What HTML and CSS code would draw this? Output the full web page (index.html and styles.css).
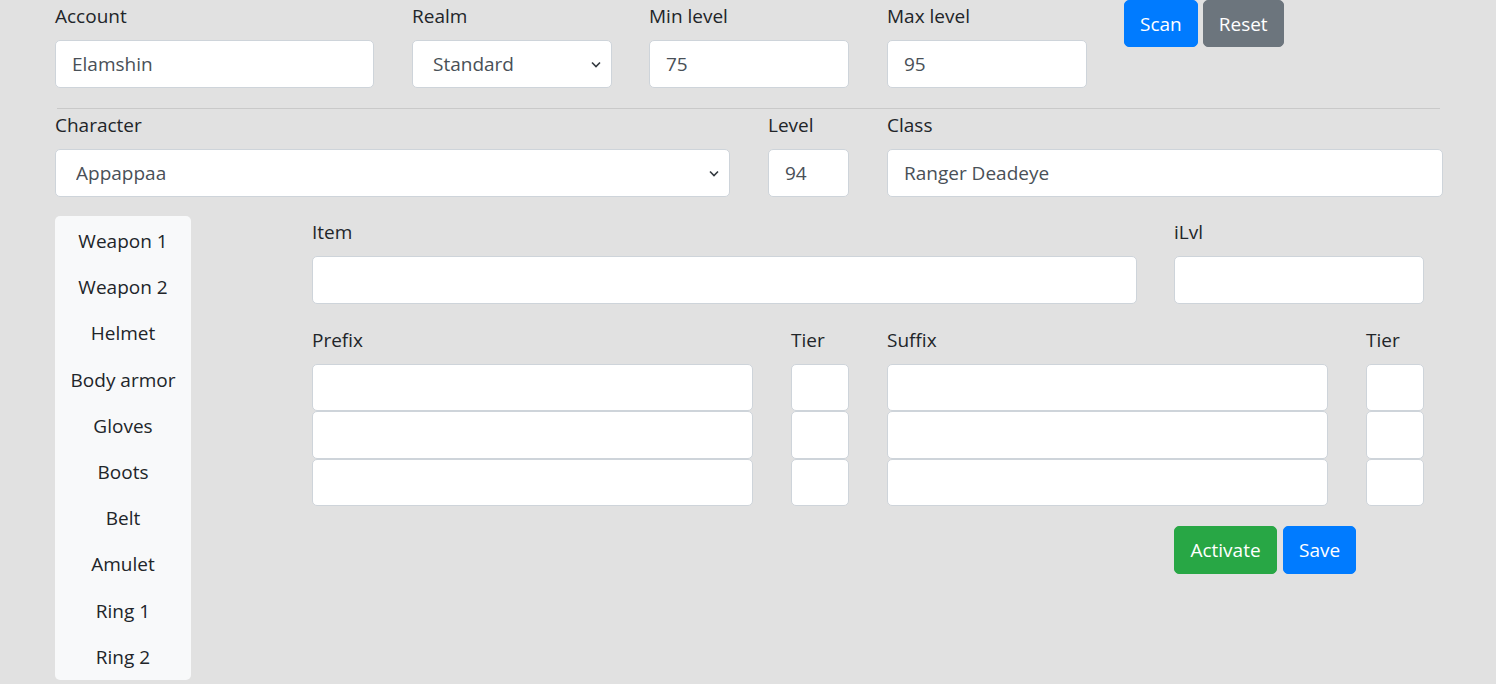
FILE: index.html
```html
<!DOCTYPE html>
<html lang="en">
<head>
<meta charset="utf-8">
<title>Scanner</title>
<link rel="stylesheet" href="styles.css">
</head>
<body>
<div class="page">
  <div class="row row-top">
    <div class="field w-account">
      <label class="lbl">Account</label>
      <input class="ctl" type="text" value="Elamshin">
    </div>
    <div class="field w-200 nudge">
      <label class="lbl">Realm</label>
      <select class="ctl sel"><option>Standard</option></select>
    </div>
    <div class="field w-200">
      <label class="lbl">Min level</label>
      <input class="ctl" type="text" value="75">
    </div>
    <div class="field w-200 nudge">
      <label class="lbl">Max level</label>
      <input class="ctl" type="text" value="95">
    </div>
    <div class="btns">
      <button class="btn btn-blue">Scan</button>
      <button class="btn btn-gray">Reset</button>
    </div>
  </div>
  <hr class="sep">
  <div class="row">
    <div class="field w-char">
      <label class="lbl">Character</label>
      <select class="ctl sel"><option>Appappaa</option></select>
    </div>
    <div class="field w-level">
      <label class="lbl">Level</label>
      <input class="ctl" type="text" value="94">
    </div>
    <div class="field w-class">
      <label class="lbl">Class</label>
      <input class="ctl" type="text" value="Ranger Deadeye">
    </div>
  </div>
  <div class="main">
    <nav class="slots">
      <a class="slot">Weapon 1</a>
      <a class="slot">Weapon 2</a>
      <a class="slot">Helmet</a>
      <a class="slot">Body armor</a>
      <a class="slot">Gloves</a>
      <a class="slot">Boots</a>
      <a class="slot">Belt</a>
      <a class="slot">Amulet</a>
      <a class="slot">Ring 1</a>
      <a class="slot">Ring 2</a>
    </nav>
    <div class="editor">
      <div class="row row-item">
        <div class="field w-item">
          <label class="lbl">Item</label>
          <input class="ctl" type="text">
        </div>
        <div class="field w-ilvl">
          <label class="lbl">iLvl</label>
          <input class="ctl" type="text">
        </div>
      </div>
      <div class="row mods">
        <div class="field w-mod">
          <label class="lbl">Prefix</label>
          <input class="ctl" type="text">
          <input class="ctl" type="text">
          <input class="ctl" type="text">
        </div>
        <div class="field w-tier">
          <label class="lbl">Tier</label>
          <input class="ctl" type="text">
          <input class="ctl" type="text">
          <input class="ctl" type="text">
        </div>
        <div class="field w-mod">
          <label class="lbl">Suffix</label>
          <input class="ctl" type="text">
          <input class="ctl" type="text">
          <input class="ctl" type="text">
        </div>
        <div class="field w-tier">
          <label class="lbl">Tier</label>
          <input class="ctl" type="text">
          <input class="ctl" type="text">
          <input class="ctl" type="text">
        </div>
      </div>
      <div class="actions">
        <button class="btn btn-green">Activate</button>
        <button class="btn btn-blue">Save</button>
      </div>
    </div>
  </div>
</div>
</body>
</html>
```
FILE: styles.css
```css
* { box-sizing: border-box; }
html, body { margin: 0; padding: 0; }
body {
  background: #e1e1e1;
  color: #212529;
  font-family: "Open Sans", "Noto Sans", sans-serif;
  font-size: 19px;
  line-height: 30px;
  overflow: hidden;
}
.page {
  padding-left: 55px;
  width: 1496px;
  height: 684px;
}
.row {
  display: flex;
  gap: 38px;
  align-items: flex-start;
}
.row-top { gap: 37px; }
.row-item { gap: 37px; }
.nudge { margin-left: 1px; }
.field {
  display: flex;
  flex-direction: column;
}
.lbl {
  display: block;
  height: 30px;
  padding-top: 1px;
  margin-bottom: 10px;
  white-space: nowrap;
}
.ctl {
  display: block;
  width: 100%;
  height: 48px;
  padding: 0 16px;
  font: inherit;
  color: #495057;
  background: #fff;
  border: 1px solid #ced4da;
  border-radius: 5px;
  outline: none;
}
.sel {
  appearance: none;
  -webkit-appearance: none;
  padding-left: 20px;
  background-image: url("data:image/svg+xml,%3Csvg xmlns='http://www.w3.org/2000/svg' width='10' height='7' viewBox='0 0 10 7'%3E%3Cpath d='M1 1.5l4 4 4-4' fill='none' stroke='%23343a40' stroke-width='1.6'/%3E%3C/svg%3E");
  background-repeat: no-repeat;
  background-position: right 10px center;
  background-size: 10px 7px;
}
.w-account { width: 319px; }
.w-200 { width: 200px; }
.w-char { width: 675px; }
.w-level { width: 81px; }
.w-class { width: 556px; }
.w-item { width: 825px; }
.w-ilvl { width: 250px; }
.w-mod { width: 441px; }
.w-tier { width: 58px; }
.btns {
  display: flex;
  gap: 5px;
}
.btn {
  height: 47px;
  padding: 0 15px;
  font: inherit;
  color: #fff;
  border: 1px solid transparent;
  border-radius: 5px;
  cursor: pointer;
}
.btn-blue { background: #007bff; border-color: #007bff; }
.btn-gray { background: #6c757d; border-color: #6c757d; }
.btn-green { background: #28a745; border-color: #28a745; }
.sep {
  width: 1383px;
  margin: 20px 0 0 2px;
  border: 0;
  border-top: 1px solid #c9c9c9;
  height: 0;
}
.main {
  display: flex;
  margin-top: 19px;
  gap: 121px;
}
.slots {
  width: 136px;
  background: #f8f9fa;
  border-radius: 5px;
  padding: 2px 0 0;
  height: 464px;
  display: flex;
  flex-direction: column;
}
.slot {
  display: block;
  height: 46.2px;
  line-height: 46px;
  text-align: center;
  color: #212529;
  white-space: nowrap;
}
.editor {
  display: flex;
  flex-direction: column;
}
.mods { margin-top: 20px; }
.mods .ctl { height: 47.34px; }
.actions {
  display: flex;
  gap: 6px;
  margin-top: 20px;
  padding-left: 862px;
}
.actions .btn { height: 48px; }
.btn-green { width: 103px; padding: 0; }
```
